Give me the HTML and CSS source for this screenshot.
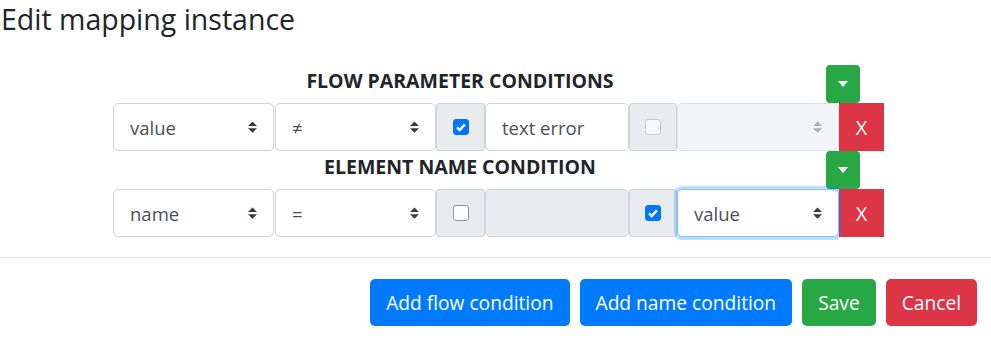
FILE: index.html
```html
<!DOCTYPE html>
<html lang="en">
<head>
    <meta charset="UTF-8">
    <title>Edit mapping instance</title>
    <link rel="stylesheet" href="styles.css">
</head>
<body>
    <h4 class="modal-title">Edit mapping instance</h4>

    <div class="conditions">
        <div class="cond-head">
            <span class="cond-title">FLOW PARAMETER CONDITIONS</span>
            <button class="btn-toggle" title="Collapse">
                <svg width="10" height="6" viewBox="0 0 10 6"><path d="M0 0h10L5 6z" fill="#fff"/></svg>
            </button>
        </div>
        <div class="cond-row">
            <select class="field sel first"><option>value</option></select>
            <select class="field sel"><option>≠</option></select>
            <label class="check-cell"><input type="checkbox" checked></label>
            <input class="field text" type="text" value="text error">
            <label class="check-cell"><input type="checkbox" disabled></label>
            <select class="field sel wide" disabled><option></option></select>
            <button class="btn-remove">X</button>
        </div>

        <div class="cond-head">
            <span class="cond-title">ELEMENT NAME CONDITION</span>
            <button class="btn-toggle" title="Collapse">
                <svg width="10" height="6" viewBox="0 0 10 6"><path d="M0 0h10L5 6z" fill="#fff"/></svg>
            </button>
        </div>
        <div class="cond-row">
            <select class="field sel first"><option>name</option></select>
            <select class="field sel"><option>=</option></select>
            <label class="check-cell"><input type="checkbox"></label>
            <input class="field text" type="text" disabled>
            <label class="check-cell"><input type="checkbox" checked></label>
            <select class="field sel wide focused"><option>value</option></select>
            <button class="btn-remove">X</button>
        </div>
    </div>

    <div class="modal-footer">
        <button class="btn btn-primary">Add flow condition</button>
        <button class="btn btn-primary">Add name condition</button>
        <button class="btn btn-success">Save</button>
        <button class="btn btn-danger">Cancel</button>
    </div>
</body>
</html>
```

FILE: styles.css
```css
body {
    margin: 0;
    font-family: 'Open Sans', 'Noto Sans', sans-serif;
    color: #212529;
    background: #fff;
}
.modal-title {
    margin: 0;
    padding-left: 1px;
    font-size: 28.5px;
    font-weight: 400;
    line-height: 39px;
    height: 65px;
}
.conditions {
    width: 771px;
    margin-left: 113px;
}
.cond-head {
    display: flex;
    align-items: center;
    height: 38px;
}
.cond-title {
    width: 694px;
    padding-bottom: 7px;
    text-align: center;
    font-size: 19.5px;
    font-weight: 700;
}
.btn-toggle {
    margin-left: 19px;
    width: 34px;
    height: 38px;
    border: none;
    border-radius: 4px;
    background: #28a745;
    display: flex;
    align-items: center;
    justify-content: center;
    padding: 0;
}
.cond-row {
    display: flex;
    height: 48px;
}
.field {
    box-sizing: border-box;
    height: 48px;
    border: 1px solid #ced4da;
    border-radius: 5px;
    font-family: inherit;
    font-size: 18.5px;
    color: #495057;
    background-color: #fff;
    padding: 0 16px;
    margin: 0;
}
.sel {
    width: 161px;
    -webkit-appearance: none;
    appearance: none;
    background-image: url("data:image/svg+xml,%3Csvg xmlns='http://www.w3.org/2000/svg' width='4' height='5' viewBox='0 0 4 5'%3E%3Cpath fill='%23343a40' d='M2 0L0 2h4zm0 5L0 3h4z'/%3E%3C/svg%3E");
    background-repeat: no-repeat;
    background-position: right 16px center;
    background-size: 9px 12px;
}
.sel.first {
    margin-right: 1px;
}
.sel.wide {
    width: 162px;
}
.sel:disabled {
    background-color: #eff1f3;
    background-image: url("data:image/svg+xml,%3Csvg xmlns='http://www.w3.org/2000/svg' width='4' height='5' viewBox='0 0 4 5'%3E%3Cpath fill='%23888d92' d='M2 0L0 2h4zm0 5L0 3h4z'/%3E%3C/svg%3E");
}
.sel.focused {
    border-color: #80bdff;
    box-shadow: 0 0 0 3px rgba(0, 123, 255, 0.25);
    position: relative;
}
.text {
    width: 144px;
}
.text:disabled {
    background-color: #e9ecef;
}
.check-cell {
    box-sizing: border-box;
    width: 48px;
    height: 48px;
    background: #e9ecef;
    border: 1px solid #ced4da;
    border-radius: 3px;
    display: flex;
    align-items: center;
    justify-content: center;
}
.check-cell:first-of-type {
    width: 49px;
}
.check-cell input {
    -webkit-appearance: none;
    appearance: none;
    width: 16px;
    height: 16px;
    margin: 0;
    border: 1px solid #8f9499;
    border-radius: 3px;
    background: #fff;
}
.check-cell input:checked {
    border-color: #0075ff;
    background: #0075ff url("data:image/svg+xml,%3Csvg xmlns='http://www.w3.org/2000/svg' viewBox='0 0 16 16'%3E%3Cpath d='M3.5 8.5l3 3 6-6.5' fill='none' stroke='%23fff' stroke-width='2.8'/%3E%3C/svg%3E") center / 14px 14px no-repeat;
}
.check-cell input:disabled {
    border-color: #c8cbcf;
    background: #f8f9fa;
}
.btn-remove {
    width: 45px;
    height: 48px;
    border: none;
    background: #dc3545;
    color: #fff;
    font-family: inherit;
    font-size: 20px;
    padding: 0;
}
.modal-footer {
    margin-top: 20px;
    border-top: 1px solid #dee2e6;
    padding: 21px 14px 0 0;
    display: flex;
    justify-content: flex-end;
    gap: 10px;
}
.btn {
    height: 47px;
    border: none;
    border-radius: 5px;
    color: #fff;
    font-family: inherit;
    font-size: 19.2px;
    padding: 0 16px;
}
.btn-primary {
    background: #007bff;
}
.btn-success {
    background: #28a745;
}
.btn-danger {
    background: #dc3545;
}
```
